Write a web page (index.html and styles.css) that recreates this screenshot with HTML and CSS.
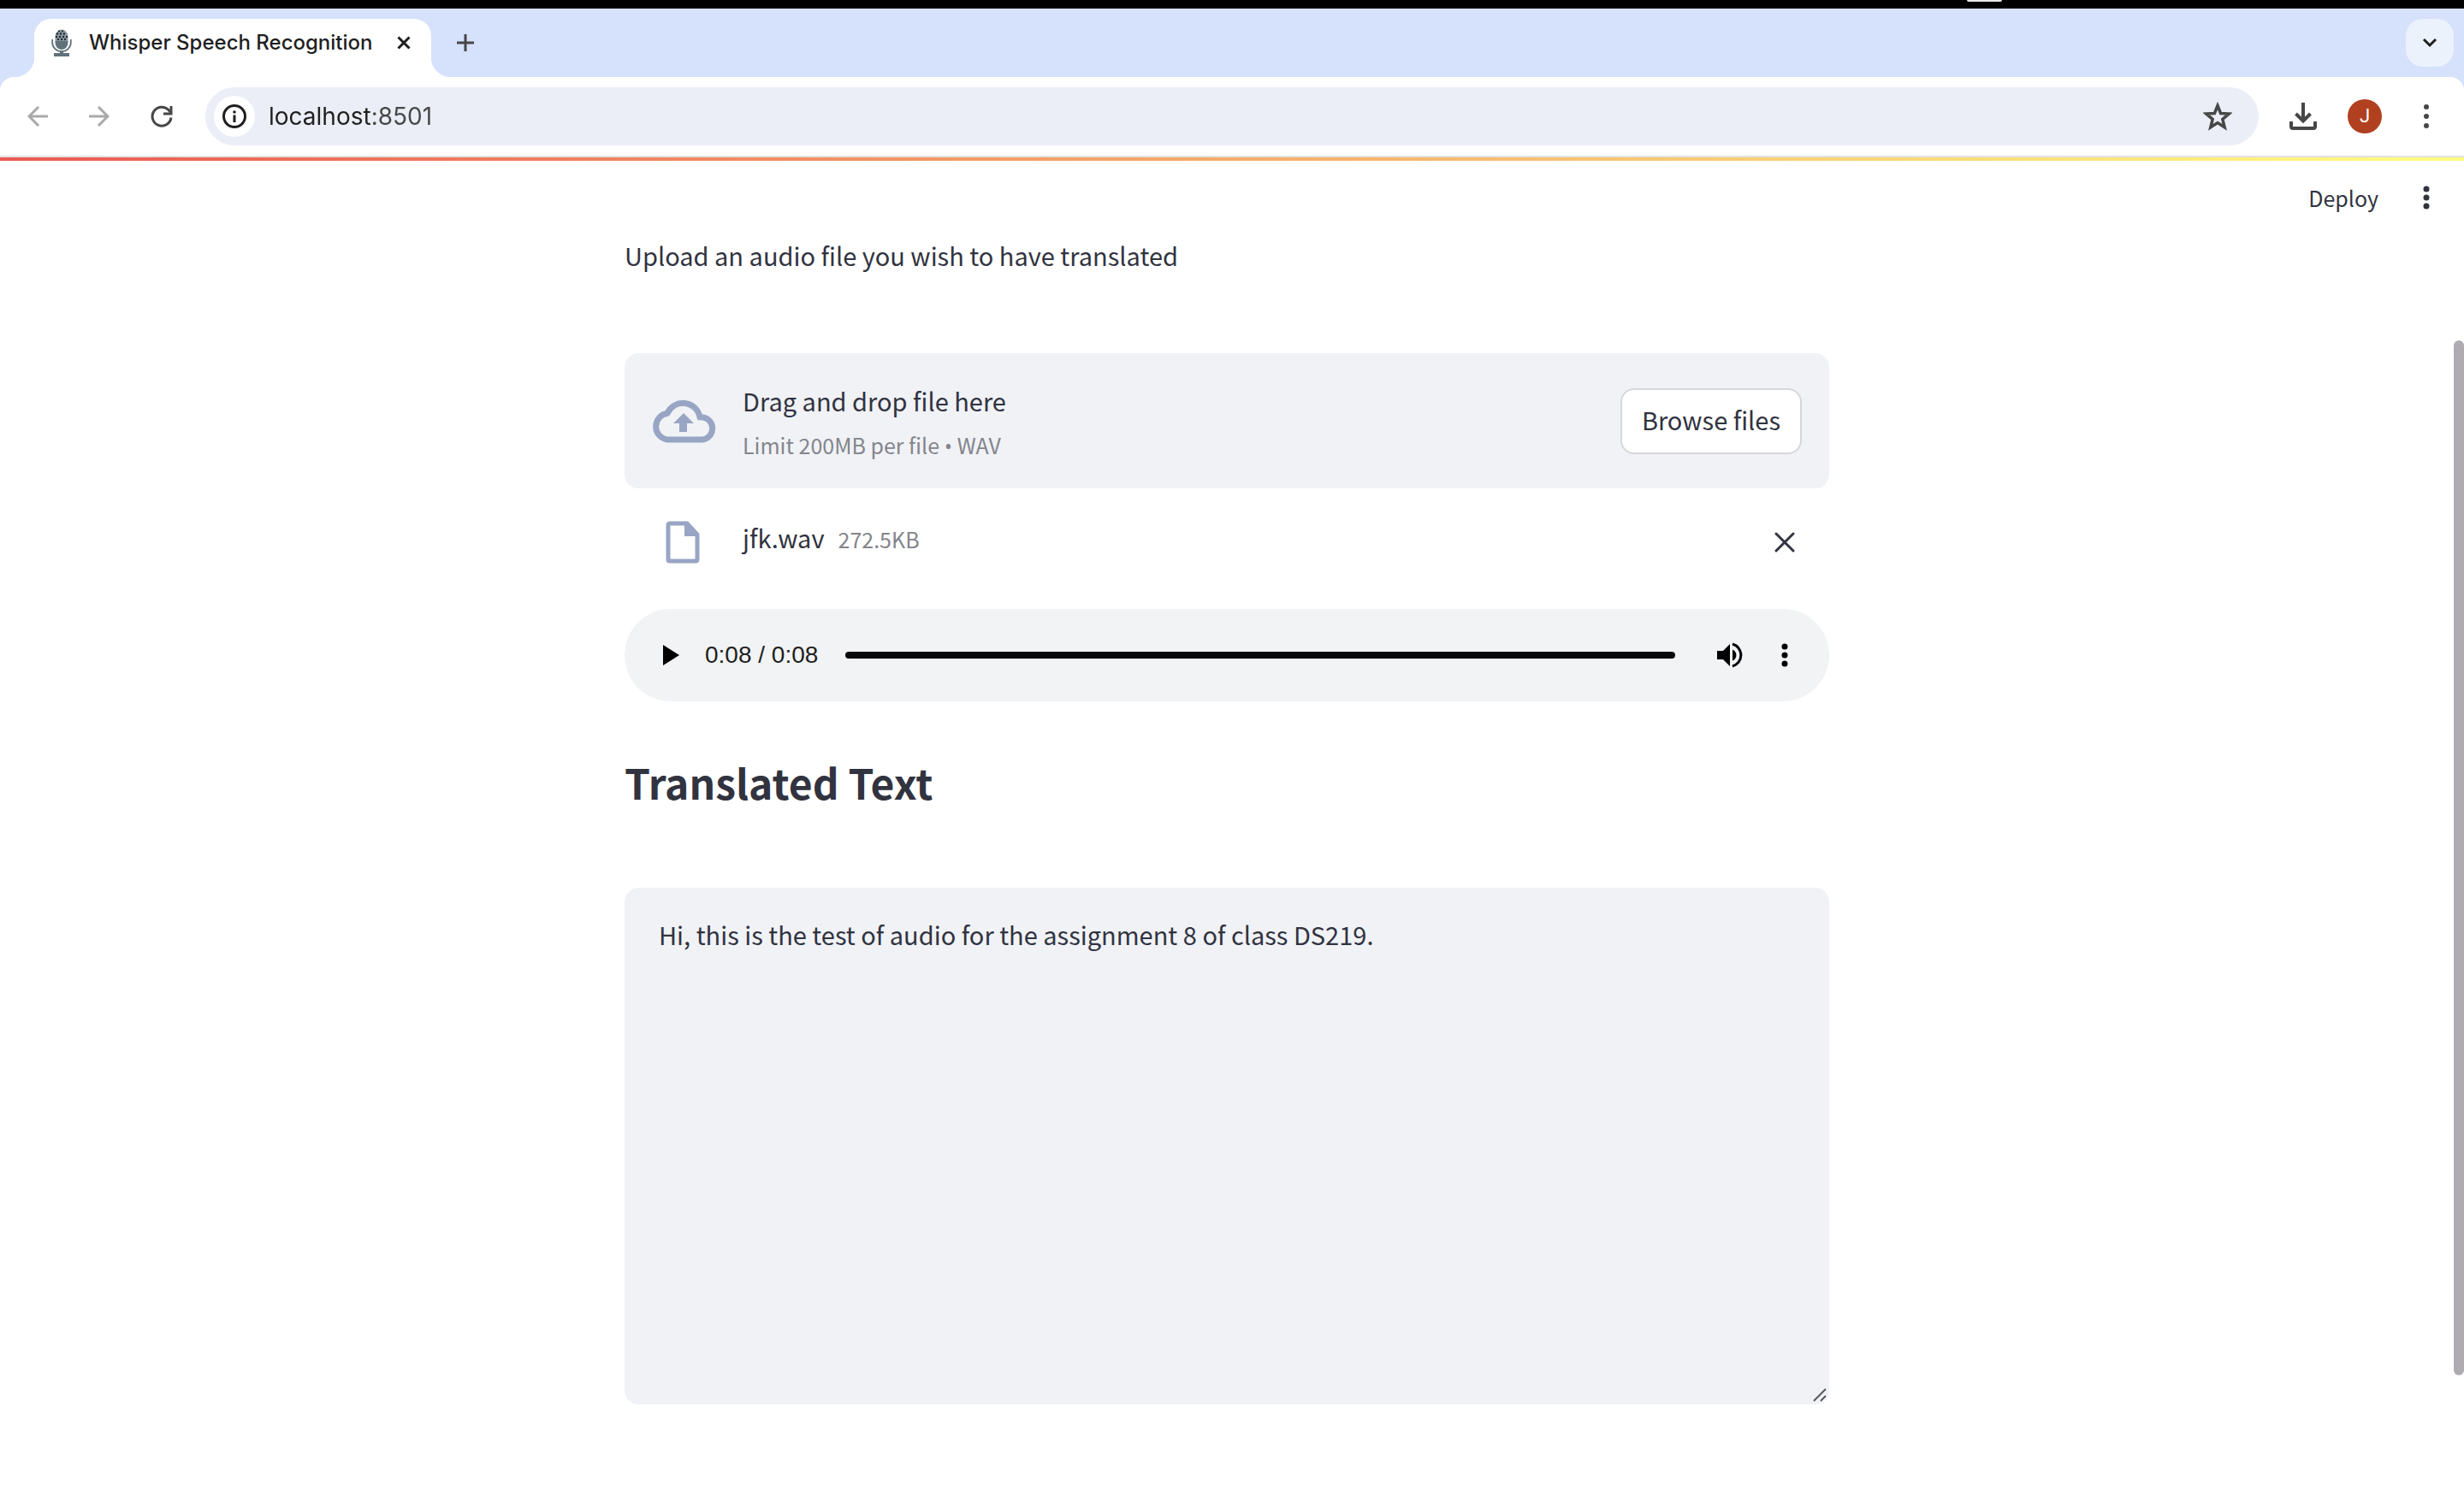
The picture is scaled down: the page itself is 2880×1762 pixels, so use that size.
FILE: index.html
```html
<!DOCTYPE html>
<html lang="en">
<head>
<meta charset="utf-8">
<title>Whisper Speech Recognition</title>
<link rel="stylesheet" href="styles.css">
</head>
<body>
<div class="menubar"><span class="notch"></span></div>

<nav class="tabstrip" aria-label="Tabs">
  <div class="tab">
    <svg class="favicon" width="24" height="32" viewBox="0 0 24 32" aria-hidden="true">
      <path d="M4.500 15V9a7.500 8.500 0 0 1 15 0v6z" fill="#8b9aa3"/>
      <g fill="#20282d"><circle cx="9" cy="2.500" r="1.100"/><circle cx="13" cy="2.500" r="1.100"/><circle cx="7" cy="5.500" r="1.200"/><circle cx="11" cy="5.500" r="1.200"/><circle cx="15" cy="5.500" r="1.200"/><circle cx="6" cy="9" r="1.200"/><circle cx="10" cy="9" r="1.200"/><circle cx="14" cy="9" r="1.200"/><circle cx="18" cy="9" r="1.200"/><circle cx="8" cy="12" r="1.200"/><circle cx="12" cy="12" r="1.200"/><circle cx="16" cy="12" r="1.200"/></g>
      <path d="M4.500 14h15v2a7.500 8 0 0 1-15 0z" fill="#62727b"/>
      <path d="M1.200 12v4a10.800 10 0 0 0 21.600 0v-4" fill="none" stroke="#62727b" stroke-width="1.800"/>
      <path d="M10 25h4v3h7v4H3v-4h7z" fill="#62727b"/>
    </svg>
    <span class="tab-title">Whisper Speech Recognition</span>
    <button class="plain tab-close" aria-label="Close tab"><svg width="16" height="16" viewBox="0 0 16 16"><path d="M1.500 1.500l13 13m0-13l-13 13" stroke="#1f1f1f" stroke-width="3"/></svg></button>
  </div>
  <button class="plain new-tab" aria-label="New tab"><svg width="20" height="20" viewBox="0 0 20 20"><path d="M10 0v20M0 10h20" stroke="#474747" stroke-width="3"/></svg></button>
  <button class="tab-search" aria-label="Search tabs"><svg width="18" height="12" viewBox="0 0 18 12"><path d="M2 2l7 7 7-7" fill="none" stroke="#1f1f1f" stroke-width="3"/></svg></button>
</nav>

<div class="toolbar-back">
<div class="toolbar">
  <div class="nav-buttons">
    <button class="plain" aria-label="Back"><svg width="24" height="24" viewBox="0 0 24 24"><path d="M24 12H2M13 1L2 12l11 11" fill="none" stroke="#a9a9a9" stroke-width="3"/></svg></button>
    <button class="plain" aria-label="Forward"><svg width="24" height="24" viewBox="0 0 24 24"><path d="M0 12h22M11 1l11 11-11 11" fill="none" stroke="#a9a9a9" stroke-width="3"/></svg></button>
    <button class="plain" aria-label="Reload"><svg width="26" height="26" viewBox="0 0 26 26"><path d="M24 14.500A11 11 0 1 1 21 5.500l2 2.500" fill="none" stroke="#474747" stroke-width="3"/><path d="M24 1v9h-9" fill="none" stroke="#474747" stroke-width="3"/></svg></button>
  </div>
  <div class="omnibox">
    <button class="site-info" aria-label="View site information"><svg width="28" height="28" viewBox="0 0 28 28"><circle cx="14" cy="14" r="12.500" fill="none" stroke="#1f1f1f" stroke-width="3"/><path d="M14 12.500V21" stroke="#1f1f1f" stroke-width="3"/><circle cx="14" cy="9" r="1.800" fill="#1f1f1f"/></svg></button>
    <input class="address" type="text" aria-label="Address" value="localhost:8501">
    <button class="plain" aria-label="Bookmark this tab"><svg width="34" height="34" viewBox="0 0 34 34"><path d="M17 4.500l3.600 9 9.600.6-7.400 6.200 2.400 9.500L17 24.600l-8.200 5.200 2.400-9.500-7.400-6.200 9.600-.6z" fill="none" stroke="#474747" stroke-width="3.500"/></svg></button>
  </div>
  <div class="toolbar-actions">
    <button class="plain" aria-label="Downloads"><svg width="32" height="32" viewBox="0 0 32 32"><path d="M16 0v20M7.500 13l8.500 8.500 8.500-8.500" fill="none" stroke="#474747" stroke-width="4"/><path d="M2 22v6q0 2 2 2h24q2 0 2-2v-6" fill="none" stroke="#474747" stroke-width="4"/></svg></button>
    <button class="avatar" aria-label="Profile J">J</button>
    <button class="plain" aria-label="Browser menu"><svg width="8" height="30" viewBox="0 0 8 30" fill="#474747"><circle cx="4" cy="4" r="3"/><circle cx="4" cy="15" r="3"/><circle cx="4" cy="26" r="3"/></svg></button>
  </div>
</div>
</div>

<div class="decoration"></div>
<div class="viewport">
  <div class="app">
    <header class="app-header">
      <button class="plain deploy">Deploy</button>
      <button class="plain" aria-label="App menu"><svg width="8" height="28" viewBox="0 0 8 28" fill="#31333f"><circle cx="4" cy="4" r="3.500"/><circle cx="4" cy="14" r="3.500"/><circle cx="4" cy="24" r="3.500"/></svg></button>
    </header>
    <main class="content">
      <p class="label">Upload an audio file you wish to have translated</p>

      <section class="dropzone">
        <svg class="row-icon" width="76" height="52" viewBox="2 0 74 52" aria-hidden="true">
          <path d="M19 48A15.500 15.500 0 0 1 19 17.300 20 20 0 0 1 57 21.800 13 13 0 0 1 60 48z" fill="none" stroke="#98a5c4" stroke-width="7" stroke-linejoin="round"/>
          <path d="M38 17l12 12h-8v10h-9V29h-7z" fill="#98a5c4"/>
        </svg>
        <div class="drop-text">
          <span class="drop-title">Drag and drop file here</span>
          <span class="muted">Limit 200MB per file <span class="bullet">•</span> WAV</span>
        </div>
        <button class="browse">Browse files</button>
      </section>

      <div class="file-row">
        <svg class="file-icon" width="40" height="50" viewBox="0 0 40 50" aria-hidden="true">
          <path d="M5 3h20l12 13v29q0 2-2 2H5q-2 0-2-2V5q0-2 2-2z" fill="none" stroke="#98a5c4" stroke-width="5"/>
          <path d="M22 2h4l12 14v2H22z" fill="#98a5c4"/>
        </svg>
        <div class="file-text"><span class="file-name">jfk.wav</span><span class="muted">272.5KB</span></div>
        <button class="plain" aria-label="Remove file"><svg width="24" height="24" viewBox="0 0 24 24"><path d="M2 2l20 20M22 2L2 22" stroke="#31333f" stroke-width="3" stroke-linecap="round"/></svg></button>
      </div>

      <section class="player" aria-label="Audio player">
        <button class="plain" aria-label="Play"><svg width="20" height="24" viewBox="0 0 20 24"><path d="M0 0v24l19-12z"/></svg></button>
        <span class="time">0:08 / 0:08</span>
        <input class="seek" type="range" min="0" max="8" value="8" aria-label="Seek">
        <button class="plain" aria-label="Mute"><svg width="32" height="32" viewBox="0 0 32 32"><path d="M1 11h7l8-8v26l-8-8H1z"/><path d="M19 9.500a7 7 0 0 1 0 13z"/><path d="M19 3a13.500 13.500 0 0 1 0 26" fill="none" stroke="#000" stroke-width="3"/></svg></button>
        <button class="plain" aria-label="Player menu"><svg width="8" height="28" viewBox="0 0 8 28"><circle cx="4" cy="4" r="3.500"/><circle cx="4" cy="14" r="3.500"/><circle cx="4" cy="24" r="3.500"/></svg></button>
      </section>

      <h2 class="heading">Translated Text</h2>

      <div class="textbox">
        <textarea class="output" aria-label="Translated Text">Hi, this is the test of audio for the assignment 8 of class DS219.</textarea>
        <svg class="grip" width="16" height="16" viewBox="0 0 16 16" aria-hidden="true"><path d="M1 15L15 1M9 15l6-6" stroke="#58595f" stroke-width="2"/></svg>
      </div>
    </main>
  </div>
  <div class="scrollbar"><div class="thumb"></div></div>
</div>
</body>
</html>
```
FILE: styles.css
```css
* { box-sizing: border-box; }

body {
  margin: 0;
  min-height: 100vh;
  display: flex;
  flex-direction: column;
  background: #fff;
  color: #31333f;
  font-family: "Noto Sans CJK SC", "Noto Sans", sans-serif;
  font-size: 29px;
  line-height: 48px;
}

svg { display: block; flex: none; }

button, input, textarea { font: inherit; color: inherit; }

button {
  display: flex;
  align-items: center;
  justify-content: center;
  flex: none;
  padding: 0;
  border: 0;
}

.plain { background: none; }

/* Browser frame */
.menubar {
  display: flex;
  justify-content: flex-end;
  height: 10px;
  padding-right: 540px;
  background: #000;
}

.notch {
  width: 41px;
  height: 2px;
  border-radius: 0 0 4px 4px;
  background: #e8e8e8;
}

.tabstrip {
  display: flex;
  align-items: center;
  height: 80px;
  padding: 0 12px 0 40px;
  background: #d6e1fc;
}

.tab {
  position: relative;
  display: flex;
  align-items: center;
  align-self: flex-end;
  width: 464px;
  height: 68px;
  padding: 0 24px 12px 20px;
  border-radius: 20px 20px 0 0;
  background: #fff;
}

/* Flared feet that join the tab to the toolbar */
.tab::before,
.tab::after {
  content: "";
  position: absolute;
  bottom: 0;
  width: 24px;
  height: 24px;
}

.tab::before {
  right: 100%;
  background: radial-gradient(circle at 0 0, transparent 24px, #fff 25px);
}

.tab::after {
  left: 100%;
  background: radial-gradient(circle at 100% 0, transparent 24px, #fff 25px);
}

.tab-title {
  flex: 1;
  margin-left: 20px;
  color: #1f1f1f;
  font-family: Inter, sans-serif;
  font-size: 24px;
  font-weight: 500;
  line-height: 32px;
  white-space: nowrap;
}

.new-tab { margin-left: 30px; }

.tab-search {
  width: 56px;
  height: 56px;
  margin-left: auto;
  border-radius: 20px;
  background: #ebf2fc;
}

.toolbar-back { background: #d6e1fc; }

.toolbar {
  display: flex;
  align-items: center;
  height: 94px;
  padding: 0 40px 0 32px;
  border-bottom: 2px solid #e1e3e1;
  border-radius: 16px 16px 0 0;
  background: #fff;
}

.nav-buttons {
  display: flex;
  align-items: center;
  gap: 48px;
}

.omnibox {
  display: flex;
  align-items: center;
  flex: 1;
  height: 68px;
  margin: 0 36px 0 38px;
  padding: 0 31px 0 10px;
  border-radius: 34px;
  background: #ebeef7;
}

.site-info {
  width: 48px;
  height: 48px;
  border-radius: 50%;
  background: #fff;
}

.address {
  flex: 1;
  min-width: 0;
  margin-left: 16px;
  padding: 0;
  border: 0;
  outline: 0;
  color: #1f1f1f;
  font-family: Inter, sans-serif;
  font-size: 28px;
  line-height: 40px;
  /* host is darker than the port */
  background: linear-gradient(90deg, #1f1f1f 120px, #474747 120px);
  background-clip: text;
  -webkit-background-clip: text;
  -webkit-text-fill-color: transparent;
}

.toolbar-actions {
  display: flex;
  align-items: center;
}

.avatar {
  width: 40px;
  height: 40px;
  margin: 0 48px 0 36px;
  border-radius: 50%;
  background: #b04020;
  color: #fff;
  font-family: Roboto, sans-serif;
  font-size: 22px;
  line-height: 24px;
}

/* App page */
.decoration {
  height: 4px;
  background: linear-gradient(90deg, #ec5953, #fffd80);
}

.viewport {
  display: flex;
  flex: 1;
}

.app {
  flex: 1;
  min-width: 0;
}

.app-header {
  display: flex;
  align-items: center;
  justify-content: flex-end;
  gap: 52px;
  height: 86px;
  padding-right: 28px;
}

.deploy { font-size: 25px; }

.content {
  max-width: 1408px;
  margin: 0 auto;
}

.label { margin: 0 0 91px; }

.dropzone {
  display: flex;
  align-items: center;
  padding: 30px 32px;
  min-height: 158px;
  border-radius: 16px;
  background: #f0f2f6;
}

.drop-text {
  display: flex;
  flex: 1;
  flex-direction: column;
  gap: 8px;
  margin-left: 30px;
}

.drop-title { line-height: 48px; }

.muted {
  color: #84858c;
  font-size: 25px;
  line-height: 40px;
}

.bullet { font-family: "Open Sans", sans-serif; line-height: 1; }

.browse {
  height: 77px;
  padding: 0 23px 4px;
  border: 2px solid #d6d7da;
  border-radius: 16px;
  background: #fff;
}

.file-row {
  display: flex;
  align-items: center;
  height: 125px;
  padding: 0 40px 0 48px;
  margin-bottom: 16px;
}

.file-text {
  display: flex;
  align-items: baseline;
  flex: 1;
  gap: 16px;
  margin-left: 50px;
  padding-bottom: 12px;
}

.player {
  display: flex;
  align-items: center;
  height: 108px;
  padding: 0 48px 0 45px;
  border-radius: 54px;
  background: #f1f3f4;
}

.time {
  margin: 0 32px 0 29px;
  color: #1f1f1f;
  font-family: "Liberation Sans", sans-serif;
  font-size: 28px;
  white-space: nowrap;
}

.seek {
  appearance: none;
  flex: 1;
  min-width: 0;
  height: 8px;
  margin: 0 48px 0 0;
  border-radius: 4px;
  background: #0a0a0a;
}

.seek::-webkit-slider-thumb {
  appearance: none;
  width: 0;
  height: 0;
}

.player button:last-child { margin-left: 44px; }

.heading {
  margin: 60px 0 90px;
  font-size: 48px;
  font-weight: 700;
  line-height: 68px;
}

.textbox { position: relative; }

.output {
  display: block;
  width: 100%;
  height: 604px;
  padding: 30px 40px;
  border: 0;
  outline: 0;
  border-radius: 16px;
  background: #f0f2f6;
  resize: none;
}

.grip {
  position: absolute;
  right: 3px;
  bottom: 3px;
}

.scrollbar {
  display: flex;
  width: 12px;
  padding: 210px 0 154px;
}

.thumb {
  flex: 1;
  border-radius: 6px;
  background: #aeacb1;
}
```
